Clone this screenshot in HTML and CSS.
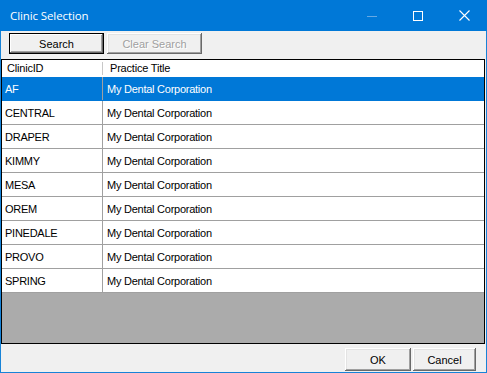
FILE: index.html
```html
<!DOCTYPE html>
<html>
<head>
<meta charset="utf-8">
<link rel="stylesheet" href="styles.css">
</head>
<body>
<div class="window">
  <div class="titlebar">
    <span class="title">Clinic Selection</span>
    <div class="controls">
      <span class="ctl ctl-min"><svg width="10" height="10" viewBox="0 0 10 10"><path d="M0 5.5H10" stroke="#66a9e4" stroke-width="1"/></svg></span>
      <span class="ctl"><svg width="10" height="10" viewBox="0 0 10 10"><rect x="0.5" y="0.5" width="9" height="9" fill="none" stroke="#fff" stroke-width="1"/></svg></span>
      <span class="ctl"><svg width="11" height="11" viewBox="0 0 11 11"><path d="M0.5 0.5L10.5 10.5M10.5 0.5L0.5 10.5" stroke="#fff" stroke-width="1.1"/></svg></span>
    </div>
  </div>
  <div class="client">
    <div class="toolbar">
      <button class="btn btn-default">Search</button>
      <button class="btn btn-disabled">Clear Search</button>
    </div>
    <div class="grid">
      <div class="header">
        <div class="hcell c1">ClinicID</div>
        <div class="hcell c2">Practice Title</div>
      </div>
      <div class="row selected"><div class="cell c1">AF</div><div class="cell c2">My Dental Corporation</div></div>
      <div class="row"><div class="cell c1">CENTRAL</div><div class="cell c2">My Dental Corporation</div></div>
      <div class="row"><div class="cell c1">DRAPER</div><div class="cell c2">My Dental Corporation</div></div>
      <div class="row"><div class="cell c1">KIMMY</div><div class="cell c2">My Dental Corporation</div></div>
      <div class="row"><div class="cell c1">MESA</div><div class="cell c2">My Dental Corporation</div></div>
      <div class="row"><div class="cell c1">OREM</div><div class="cell c2">My Dental Corporation</div></div>
      <div class="row"><div class="cell c1">PINEDALE</div><div class="cell c2">My Dental Corporation</div></div>
      <div class="row"><div class="cell c1">PROVO</div><div class="cell c2">My Dental Corporation</div></div>
      <div class="row"><div class="cell c1">SPRING</div><div class="cell c2">My Dental Corporation</div></div>
      <div class="empty"></div>
    </div>
    <div class="footer">
      <button class="btn btn-ok">OK</button>
      <button class="btn btn-cancel">Cancel</button>
    </div>
  </div>
</div>
</body>
</html>
```

FILE: styles.css
```css
* { box-sizing: border-box; }
html, body { margin: 0; padding: 0; }
body { background: #f0f0f0; }

.window {
  width: 487px;
  height: 373px;
  border: 1px solid #1883d7;
  border-top: none;
  display: flex;
  flex-direction: column;
  font-family: "Liberation Sans", Arial, sans-serif;
  font-size: 11px;
  background: #f0f0f0;
}

.titlebar {
  height: 31px;
  flex: none;
  background: #0078d7;
  display: flex;
  align-items: center;
  margin: 0 -1px;
  padding-left: 10px;
}
.title {
  color: #fff;
  font-family: "Open Sans", "Noto Sans", sans-serif;
  font-size: 11.5px;
  letter-spacing: -0.1px;
}
.controls {
  margin-left: auto;
  display: flex;
  height: 100%;
}
.ctl {
  width: 46px;
  display: flex;
  align-items: center;
  justify-content: center;
}

.client {
  flex: 1;
  display: flex;
  flex-direction: column;
}

.toolbar {
  height: 28px;
  flex: none;
  display: flex;
  gap: 3px;
  padding: 2px 0 0 8px;
}

.btn {
  font-family: "Liberation Sans", Arial, sans-serif;
  font-size: 11px;
  background: #f0f0f0;
  color: #000;
  padding: 0;
  margin: 0;
  border: none;
  outline: none;
  width: 95px;
  height: 21px;
  box-shadow: inset -1px -1px 0 #696969, inset 1px 1px 0 #fff, inset -2px -2px 0 #a0a0a0, inset 2px 2px 0 #e3e3e3;
}
.btn-default {
  border: 1px solid #000;
  box-shadow: inset -1px -1px 0 #696969, inset 1px 1px 0 #fff, inset -2px -2px 0 #a0a0a0;
}
.btn-disabled {
  color: #a0a0a0;
  text-shadow: 1px 1px 0 #fff;
}

.grid {
  flex: none;
  height: 285px;
  margin-right: 1px;
  border: 1px solid #000;
  background: #ababab;
  display: flex;
  flex-direction: column;
}
.header {
  height: 17px;
  flex: none;
  background: #fff;
  display: flex;
}
.hcell {
  line-height: 17px;
  color: #000;
  white-space: nowrap;
  letter-spacing: -0.2px;
}
.hcell.c1 {
  width: 101px;
  padding-left: 5px;
  position: relative;
}
.hcell.c1::after {
  content: "";
  position: absolute;
  right: 0;
  top: 2px;
  bottom: 2px;
  width: 1px;
  background: #c8c8c8;
}
.hcell.c2 { padding-left: 7px; }

.row {
  height: 24px;
  flex: none;
  display: flex;
  background: #fff;
  border-bottom: 1px solid #a0a0a0;
}
.cell {
  padding-top: 1px;
  line-height: 22px;
  white-space: nowrap;
  color: #000;
  letter-spacing: -0.25px;
}
.cell.c1 {
  width: 101px;
  padding-left: 3px;
  border-right: 1px solid #a0a0a0;
}
.cell.c2 { padding-left: 4px; }
.row.selected {
  background: #0078d7;
  border-bottom-color: #0078d7;
}
.row.selected .cell { color: #fff; }

.empty { flex: 1; }

.footer {
  flex: 1;
  display: flex;
  justify-content: flex-end;
  align-items: flex-start;
  gap: 2px;
  padding: 4px 10px 0 0;
}
.btn-ok { width: 66px; height: 23px; }
.btn-cancel { width: 63px; height: 23px; }
```
